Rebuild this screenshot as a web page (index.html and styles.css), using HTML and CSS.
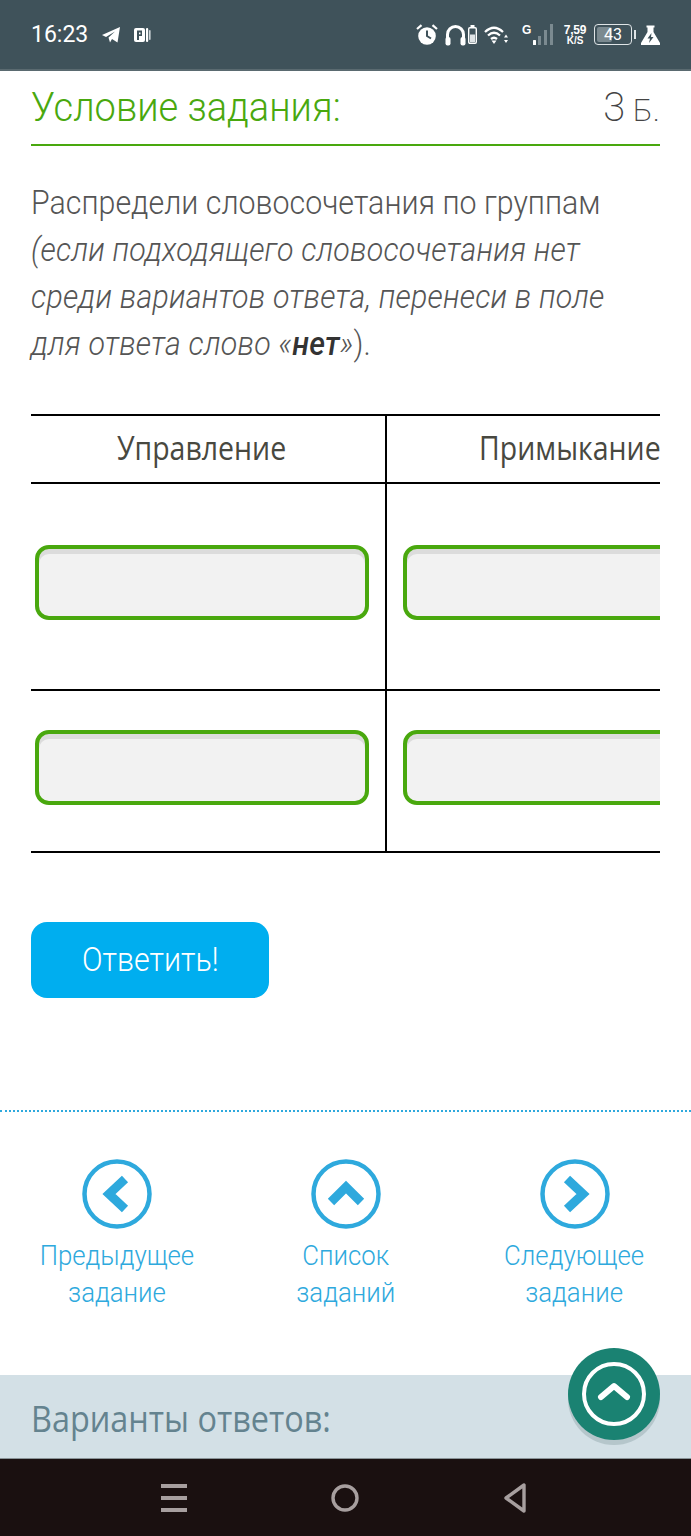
FILE: index.html
```html
<!DOCTYPE html>
<html lang="en">
<head>
  <meta charset="UTF-8" />
  <meta name="viewport" content="width=device-width, initial-scale=1.0"/>
  <title>Условие задания</title>
  <link rel="stylesheet" href="styles.css">
</head>
<body>
  <div class="status-bar">
    <div class="status-left">
      <span class="clock">16:23</span>
      <svg width="18" height="16" viewBox="0 0 18 16"><path d="M0 8 L18 0 L15.5 15.5 L10 12 L8 15.5 L6.5 10.5 L13 4.5 L4 10 Z" fill="#fff"/></svg>
      <svg width="17" height="16" viewBox="0 0 17 16"><rect x="0" y="1" width="11" height="14" rx="2" fill="#fff"/><path d="M3 3.5 H8 V9 H5 V13 H3 Z" fill="#3f525a"/><rect x="5" y="5.5" width="1.5" height="1.8" fill="#fff"/><rect x="12" y="1" width="2.2" height="14" rx="1" fill="#fff"/><rect x="15" y="3" width="1.6" height="10" rx="0.8" fill="#cfd6d9"/></svg>
    </div>
    <div class="status-right">
      <svg class="ic-alarm" width="22" height="21" viewBox="0 0 22 21"><circle cx="11" cy="12" r="8.8" fill="#fff"/><path d="M11 6.5 V12 L15 14.5" fill="none" stroke="#3f525a" stroke-width="2"/><path d="M1 5 L5.5 1.2 M21 5 L16.5 1.2" stroke="#fff" stroke-width="2.2"/></svg>
      <svg class="ic-head" width="21" height="22" viewBox="0 0 21 22"><path d="M2.5 17 V10.5 A8 8 0 0 1 18.5 10.5 V17" fill="none" stroke="#fff" stroke-width="3"/><rect x="0.5" y="13" width="5" height="8.5" rx="2" fill="#fff"/><rect x="15.5" y="13" width="5" height="8.5" rx="2" fill="#fff"/></svg>
      <svg class="ic-batt" width="9" height="19" viewBox="0 0 9 19"><rect x="2.5" y="0" width="4" height="2.5" fill="#fff"/><rect x="0.7" y="2.7" width="7.6" height="15.6" rx="1.2" fill="none" stroke="#fff" stroke-width="1.4"/><rect x="2" y="9.5" width="5" height="7.5" fill="#dfe4e6"/></svg>
      <svg class="ic-wifi" width="24" height="20" viewBox="0 0 24 20"><path d="M1 7 Q10 -1.5 19 7 M4 10.5 Q10 5 16 10.5 M7 14 Q10 11.5 13 14" fill="none" stroke="#fff" stroke-width="2.3"/><path d="M7.5 15.5 H12.5 L10 19 Z" fill="#fff"/><path d="M20 12.5 L22 9.5 L24 12.5 Z M20 15 L22 18 L24 15 Z" fill="#fff"/></svg>
      <div class="signal">
        <span class="sig-g">G</span>
        <svg width="20" height="21" viewBox="11 0 20 21"><rect x="11" y="16" width="3" height="5" rx="0.5" fill="#fff"/><rect x="16" y="12" width="3" height="9" fill="#7b8a90"/><rect x="22" y="6" width="3" height="15" fill="#7b8a90"/><rect x="28" y="0" width="3" height="21" fill="#7b8a90"/></svg>
      </div>
      <div class="net-speed"><span class="speed-num">7,59</span><span class="speed-unit">K/S</span></div>
      <div class="battery">
        <div class="battery-box"><span class="battery-fill"></span><span class="battery-num">43</span></div>
        <span class="battery-tip"></span>
      </div>
      <svg class="ic-flask" width="19" height="20" viewBox="0 0 19 20"><path d="M5.5 0.5 H13.5 V2.5 H12.5 V7 L19 18 A1 1 0 0 1 18 20 H1 A1 1 0 0 1 0 18 L6.5 7 V2.5 H5.5 Z" fill="#fff"/><path d="M10.5 8 L6.5 13.5 H9 L8 18 L12.5 12 H10 Z" fill="#3f525a"/></svg>
    </div>
  </div>

  <div class="content">
    <div class="task-head">
      <h1 class="task-title">Условие задания:</h1>
      <div class="task-score">3 <span>Б.</span></div>
    </div>

    <p class="task-text">Распредели словосочетания по группам<br><em>(если подходящего словосочетания нет<br>среди вариантов ответа, перенеси в поле<br>для ответа слово «<b>нет</b>»</em>).</p>

    <div class="table-wrap">
      <table class="groups">
        <tr class="head-row">
          <th><span>Управление</span></th>
          <th><span>Примыкание</span></th>
        </tr>
        <tr class="row-one">
          <td><div class="drop"></div></td>
          <td><div class="drop"></div></td>
        </tr>
        <tr class="row-two">
          <td><div class="drop"></div></td>
          <td><div class="drop"></div></td>
        </tr>
      </table>
    </div>

    <button type="button" class="answer-btn"><span>Ответить!</span></button>
  </div>

  <div class="task-nav">
    <a class="nav-item">
      <svg width="70" height="70" viewBox="0 0 70 70"><circle cx="35" cy="35" r="32.5" class="nav-ring"/><path d="M43 20 L27 35 L43 50" class="nav-arrow"/></svg>
      <span>Предыдущее<br>задание</span>
    </a>
    <a class="nav-item">
      <svg width="70" height="70" viewBox="0 0 70 70"><circle cx="35" cy="35" r="32.5" class="nav-ring"/><path d="M20 43 L35 28 L50 43" class="nav-arrow"/></svg>
      <span>Список<br>заданий</span>
    </a>
    <a class="nav-item">
      <svg width="70" height="70" viewBox="0 0 70 70"><circle cx="35" cy="35" r="32.5" class="nav-ring"/><path d="M27 20 L43 35 L27 50" class="nav-arrow"/></svg>
      <span>Следующее<br>задание</span>
    </a>
  </div>

  <div class="answers-bar"><span>Варианты ответов:</span></div>

  <div class="fab">
    <svg width="66" height="66" viewBox="0 0 66 66"><circle cx="33" cy="33" r="30" fill="none" stroke="#fff" stroke-width="4"/><path d="M20 36 L33 25 L46 36" fill="none" stroke="#fff" stroke-width="6" stroke-linecap="round" stroke-linejoin="round"/></svg>
  </div>

  <div class="android-nav">
    <svg width="28" height="30" viewBox="0 0 28 30"><path d="M1 3 H27 M1 15 H27 M1 27 H27" stroke="#a79f9f" stroke-width="4"/></svg>
    <svg width="28" height="30" viewBox="0 0 28 30"><ellipse cx="14" cy="15" rx="12" ry="12" fill="none" stroke="#a79f9f" stroke-width="3.4"/></svg>
    <svg width="26" height="32" viewBox="0 0 26 32"><path d="M22 3 V29 L4 16 Z" fill="none" stroke="#a79f9f" stroke-width="3.4" stroke-linejoin="round"/></svg>
  </div>
</body>
</html>
```

FILE: styles.css
```css
* {
  box-sizing: border-box;
}

html, body {
  height: 100%;
}

body {
  margin: 0;
  height: 1536px;
  overflow: hidden;
  position: relative;
  display: flex;
  flex-direction: column;
  background-color: #fff;
  font-family: Roboto, "Noto Sans", sans-serif;
  font-weight: 300;
}

/* status bar */
.status-bar {
  height: 71px;
  flex: none;
  display: flex;
  justify-content: space-between;
  align-items: center;
  padding: 0 31px;
  background-color: #3f525a;
  border-bottom: 2px solid #5a6a70;
  color: #fff;
}

.status-left {
  display: flex;
  align-items: center;
  gap: 14px;
}

.clock {
  font-size: 23px;
  font-weight: 400;
}

.status-right {
  display: flex;
  align-items: center;
}

.ic-head {
  margin-left: 7px;
}

.ic-batt {
  margin-left: 2px;
}

.ic-wifi {
  margin-left: 7px;
}

.signal {
  width: 31px;
  height: 21px;
  margin-left: 14px;
  display: flex;
  justify-content: space-between;
  align-items: flex-start;
}

.sig-g {
  font: 700 12px/12px "Liberation Sans", sans-serif;
}

.net-speed {
  width: 24px;
  display: flex;
  flex-direction: column;
  align-items: center;
  margin-left: 10px;
  font-family: "Liberation Sans", sans-serif;
  font-weight: 700;
}

.speed-num {
  font-size: 12px;
  line-height: 11px;
  letter-spacing: -0.2px;
}

.speed-unit {
  font-size: 10px;
  line-height: 9px;
}

.battery {
  display: flex;
  align-items: center;
  margin-left: 7px;
  gap: 2px;
}

.battery-box {
  width: 38px;
  height: 21px;
  position: relative;
  display: flex;
  align-items: center;
  justify-content: center;
  border: 1.5px solid #dfe4e6;
  border-radius: 4px;
}

.battery-fill {
  position: absolute;
  left: 2px;
  top: 2px;
  bottom: 2px;
  width: 15px;
  border-radius: 2px;
  background-color: #7b8a90;
}

.battery-num {
  position: relative;
  font: 400 16px Roboto, sans-serif;
}

.battery-tip {
  width: 2px;
  height: 9px;
  background-color: #dfe4e6;
}

.ic-flask {
  margin-left: 5px;
}

/* task */
.content {
  flex: none;
  height: 1039px;
  padding: 0 31px;
}

.task-head {
  height: 75px;
  display: flex;
  justify-content: space-between;
  align-items: center;
  border-bottom: 2px solid #49a80e;
}

.task-title {
  margin: 0;
  color: #49a80e;
  font-size: 40px;
  font-weight: 300;
  transform: scaleX(0.95);
  transform-origin: left;
}

.task-score {
  color: #444;
  font-size: 40px;
  font-weight: 200;
  word-spacing: -2px;
}

.task-score span {
  font-size: 32px;
}

.task-text {
  margin: 33px 0 0;
  color: #555;
  font-size: 33px;
  line-height: 47px;
  font-weight: 300;
  white-space: nowrap;
  transform: scaleX(0.92);
  transform-origin: left;
}

.task-text em {
  letter-spacing: 0.22px;
}

.task-text b {
  font-weight: 500;
  color: #333;
}

.table-wrap {
  margin-top: 47px;
  overflow: hidden;
}

.groups {
  width: 710px;
  border-collapse: collapse;
  table-layout: fixed;
}

.groups th,
.groups td {
  padding: 0 4px 8px 16px;
  border: 2px solid #000;
  border-left: none;
  border-right: none;
}

.groups th:first-child,
.groups td:first-child {
  width: 355px;
  padding: 0 17px 8px 4px;
  border-right: 2px solid #000;
}

.groups th {
  height: 68px;
  color: #484840;
  font-family: "Open Sans", sans-serif;
  font-size: 33.5px;
  font-weight: 500;
  text-align: center;
  white-space: nowrap;
}

.groups th span {
  display: inline-block;
  transform: scaleX(0.85);
}

.groups th,
.groups th:first-child {
  padding-bottom: 4px;
}

.row-one td {
  height: 207px;
}

.row-two td {
  height: 162px;
}

.drop {
  width: 334px;
  height: 75px;
  border: 4px solid #49a80e;
  border-radius: 14px;
  background-color: #f2f2f2;
  box-shadow: inset 0 5px 0 #dcdcdc;
}

.answer-btn {
  display: block;
  width: 238px;
  height: 76px;
  margin-top: 69px;
  padding-bottom: 3px;
  border: none;
  border-radius: 16px;
  background-color: #00aeef;
  color: #fff;
  font-family: Roboto, sans-serif;
  font-size: 33px;
  font-weight: 300;
}

.answer-btn span {
  display: inline-block;
  transform: scaleX(0.92);
}

/* prev / list / next */
.task-nav {
  flex: none;
  height: 265px;
  display: grid;
  grid-template-columns: 229px 229px 229px;
  padding: 47px 0 0 2px;
  border-top: 2px dotted #2ea9dd;
}

.nav-item {
  display: flex;
  flex-direction: column;
  align-items: center;
  color: #2ea9dd;
  font-size: 28px;
  line-height: 37px;
  text-align: center;
}

.nav-item span {
  margin-top: 8px;
  white-space: nowrap;
  transform: scaleX(0.92);
}

.nav-ring {
  fill: none;
  stroke: #2ea9dd;
  stroke-width: 4.5;
}

.nav-arrow {
  fill: none;
  stroke: #2ea9dd;
  stroke-width: 9;
}

/* bottom */
.answers-bar {
  flex: none;
  height: 84px;
  padding: 20px 31px 0;
  background-color: #d3e0e6;
  border-bottom: 1px solid #8a9498;
  color: #64838f;
  font-family: "Open Sans", sans-serif;
  font-size: 36px;
  font-weight: 500;
  line-height: 48px;
}

.answers-bar span {
  display: inline-block;
  transform: scaleX(0.9);
  transform-origin: left;
}

.fab {
  position: absolute;
  left: 568px;
  top: 1348px;
  width: 92px;
  height: 92px;
  display: flex;
  align-items: center;
  justify-content: center;
  border-radius: 50%;
  background-color: #1a8272;
  box-shadow: 0 5px 0 rgba(90, 120, 125, 0.25);
}

.android-nav {
  flex: 1;
  display: flex;
  align-items: center;
  padding: 0 163px 0 160px;
  justify-content: space-between;
  background-color: #1a1010;
}
```
